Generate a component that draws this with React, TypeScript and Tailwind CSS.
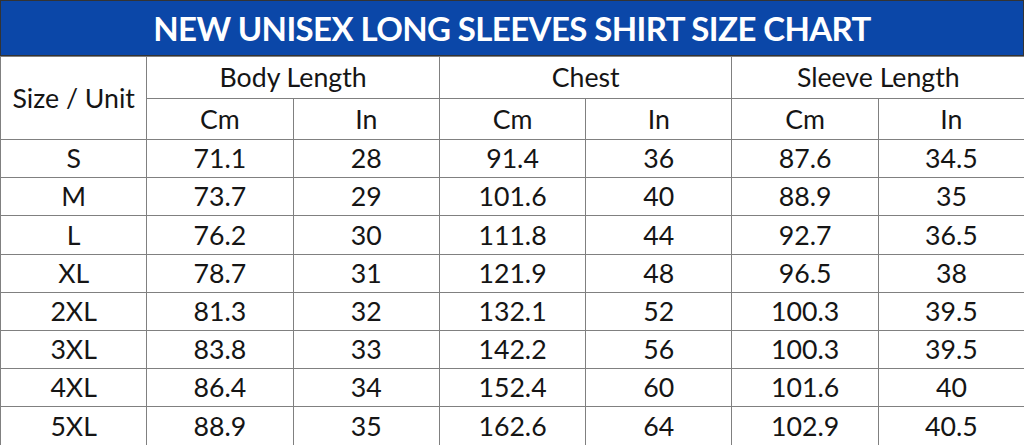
import React from 'react'

const rows: string[][] = [
  ['S', '71.1', '28', '91.4', '36', '87.6', '34.5'],
  ['M', '73.7', '29', '101.6', '40', '88.9', '35'],
  ['L', '76.2', '30', '111.8', '44', '92.7', '36.5'],
  ['XL', '78.7', '31', '121.9', '48', '96.5', '38'],
  ['2XL', '81.3', '32', '132.1', '52', '100.3', '39.5'],
  ['3XL', '83.8', '33', '142.2', '56', '100.3', '39.5'],
  ['4XL', '86.4', '34', '152.4', '60', '101.6', '40'],
  ['5XL', '88.9', '35', '162.6', '64', '102.9', '40.5'],
]

const cell = 'border border-[#808080] text-center p-0 font-normal'

export default function App() {
  return (
    <div className="w-[1024px] h-[445px] bg-white overflow-hidden font-['Lato',sans-serif] text-[#151515]">
      <div className="h-[56px] bg-[#0b47a8] border border-[#333] flex items-center justify-center">
        <h1 className="text-white font-bold text-[33px] leading-none tracking-[-0.6px]">
          NEW UNISEX LONG SLEEVES SHIRT SIZE CHART
        </h1>
      </div>
      <table className="w-full table-fixed border-collapse text-[26.7px] leading-none">
        <colgroup>
          {Array.from({ length: 7 }).map((_, i) => (
            <col key={i} className="w-[146.3px]" />
          ))}
        </colgroup>
        <thead>
          <tr className="h-[42px]">
            <th rowSpan={2} className={cell}>Size / Unit</th>
            <th colSpan={2} className={cell}>Body Length</th>
            <th colSpan={2} className={cell}>Chest</th>
            <th colSpan={2} className={cell}>Sleeve Length</th>
          </tr>
          <tr className="h-[41px]">
            {['Cm', 'In', 'Cm', 'In', 'Cm', 'In'].map((u, i) => (
              <th key={i} className={cell}>{u}</th>
            ))}
          </tr>
        </thead>
        <tbody>
          {rows.map((r) => (
            <tr key={r[0]} className="h-[38.2px]">
              {r.map((v, i) => (
                <td key={i} className={cell}>{v}</td>
              ))}
            </tr>
          ))}
        </tbody>
      </table>
    </div>
  )
}
